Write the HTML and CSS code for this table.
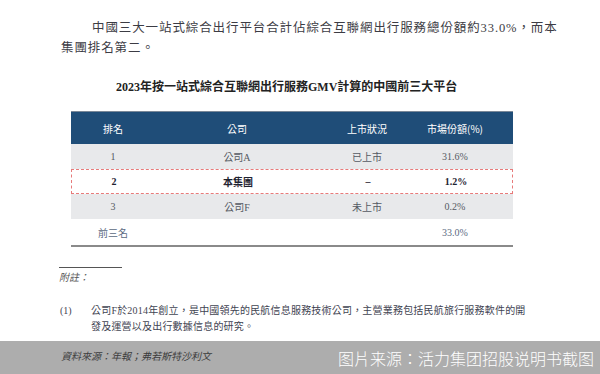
FILE: index.html
```html
<!DOCTYPE html>
<html lang="zh-Hant">
<head>
<meta charset="utf-8">
<link rel="stylesheet" href="styles.css">
</head>
<body>
<div class="page">
  <p class="para">中國三大一站式綜合出行平台合計佔綜合互聯網出行服務總份額約33.0%，而本<br><span class="cont">集團排名第二。</span></p>
  <h2 class="title">2023年按一站式綜合互聯網出行服務GMV計算的中國前三大平台</h2>
  <div class="table">
    <div class="row head">
      <div class="cell">排名</div>
      <div class="cell">公司</div>
      <div class="cell">上市狀況</div>
      <div class="cell">市場份額(%)</div>
    </div>
    <div class="row gray">
      <div class="cell">1</div>
      <div class="cell">公司A</div>
      <div class="cell">已上市</div>
      <div class="cell">31.6%</div>
    </div>
    <div class="row mine">
      <div class="cell">2</div>
      <div class="cell">本集團</div>
      <div class="cell">–</div>
      <div class="cell">1.2%</div>
    </div>
    <div class="row gray">
      <div class="cell">3</div>
      <div class="cell">公司F</div>
      <div class="cell">未上市</div>
      <div class="cell">0.2%</div>
    </div>
    <div class="row total">
      <div class="cell">前三名</div>
      <div class="cell"></div>
      <div class="cell"></div>
      <div class="cell">33.0%</div>
    </div>
  </div>
  <div class="notes">
    <div class="rule"></div>
    <div class="note-title">附註：</div>
    <div class="note">
      <span class="num">(1)</span>
      <span class="note-text">公司F於2014年創立，是中國領先的民航信息服務技術公司，主營業務包括民航旅行服務軟件的開<br>發及運營以及出行數據信息的研究。</span>
    </div>
  </div>
</div>
<div class="footer">
  <span class="source">資料來源：年報；弗若斯特沙利文</span>
  <span class="credit">图片来源：活力集团招股说明书截图</span>
</div>
</body>
</html>
```

FILE: styles.css
```css
html, body {
  margin: 0;
  padding: 0;
  background: #ffffff;
}
body {
  width: 600px;
  height: 374px;
  overflow: hidden;
  display: flex;
  flex-direction: column;
  font-family: "Liberation Serif", "Noto Sans CJK TC", serif;
  color: #3a3a40;
}
.page {
  flex: 1;
  padding: 18px 0 0 61px;
}
.para {
  margin: 0;
  font-size: 12.5px;
  line-height: 20px;
  text-indent: 31px;
  letter-spacing: 0.9px;
  color: #3c3c44;
}
.para .cont {
  display: inline-block;
  text-indent: 0;
}
.title {
  margin: 21px 0 0 55px;
  font-size: 12px;
  line-height: 16px;
  font-weight: bold;
  color: #222;
  letter-spacing: 0;
}
.table {
  margin: 16px 0 0 10px;
  width: 442px;
  border-bottom: 2px solid #8a8a8a;
}
.row {
  display: grid;
  grid-template-columns: 84px 164px 96px 80px 1fr;
  height: 25px;
  align-items: center;
  font-size: 10px;
  color: #555a63;
}
.cell {
  text-align: center;
}
.head {
  height: 33px;
  background: #1f4d78;
  color: #ffffff;
  font-family: "Noto Sans CJK TC", "Liberation Sans", sans-serif;
  font-size: 10px;
  border-top: 1px solid #7a8898;
  box-sizing: border-box;
}
.gray {
  background: #e8e9eb;
}
.mine {
  box-sizing: border-box;
  border: 1px dashed #e77a7a;
  font-weight: bold;
  color: #1e2230;
}
.total {
  height: 26px;
  color: #5b6a82;
}
.notes {
  padding-top: 20px;
}
.rule {
  width: 63px;
  height: 1px;
  background: #555;
  margin-left: -2px;
}
.note-title {
  margin-top: 3px;
  font-size: 10px;
  line-height: 14px;
  font-style: italic;
  color: #555;
  margin-left: -2px;
}
.note {
  display: flex;
  margin-top: 18px;
  font-size: 10px;
  line-height: 16px;
  color: #3f4452;
}
.num {
  width: 31px;
  flex: none;
  margin-left: -1px;
}
.note-text {
  letter-spacing: 0.2px;
}
.footer {
  height: 33px;
  flex: none;
  background: #adadad;
  display: flex;
  align-items: center;
  justify-content: space-between;
  padding: 0 6px 0 61px;
}
.source {
  font-size: 10px;
  font-style: italic;
  color: #3c3c3c;
  margin-top: -5px;
}
.credit {
  font-family: "Noto Sans CJK SC", sans-serif;
  font-weight: 300;
  font-size: 16px;
  color: #ffffff;
  letter-spacing: 0;
}
```
